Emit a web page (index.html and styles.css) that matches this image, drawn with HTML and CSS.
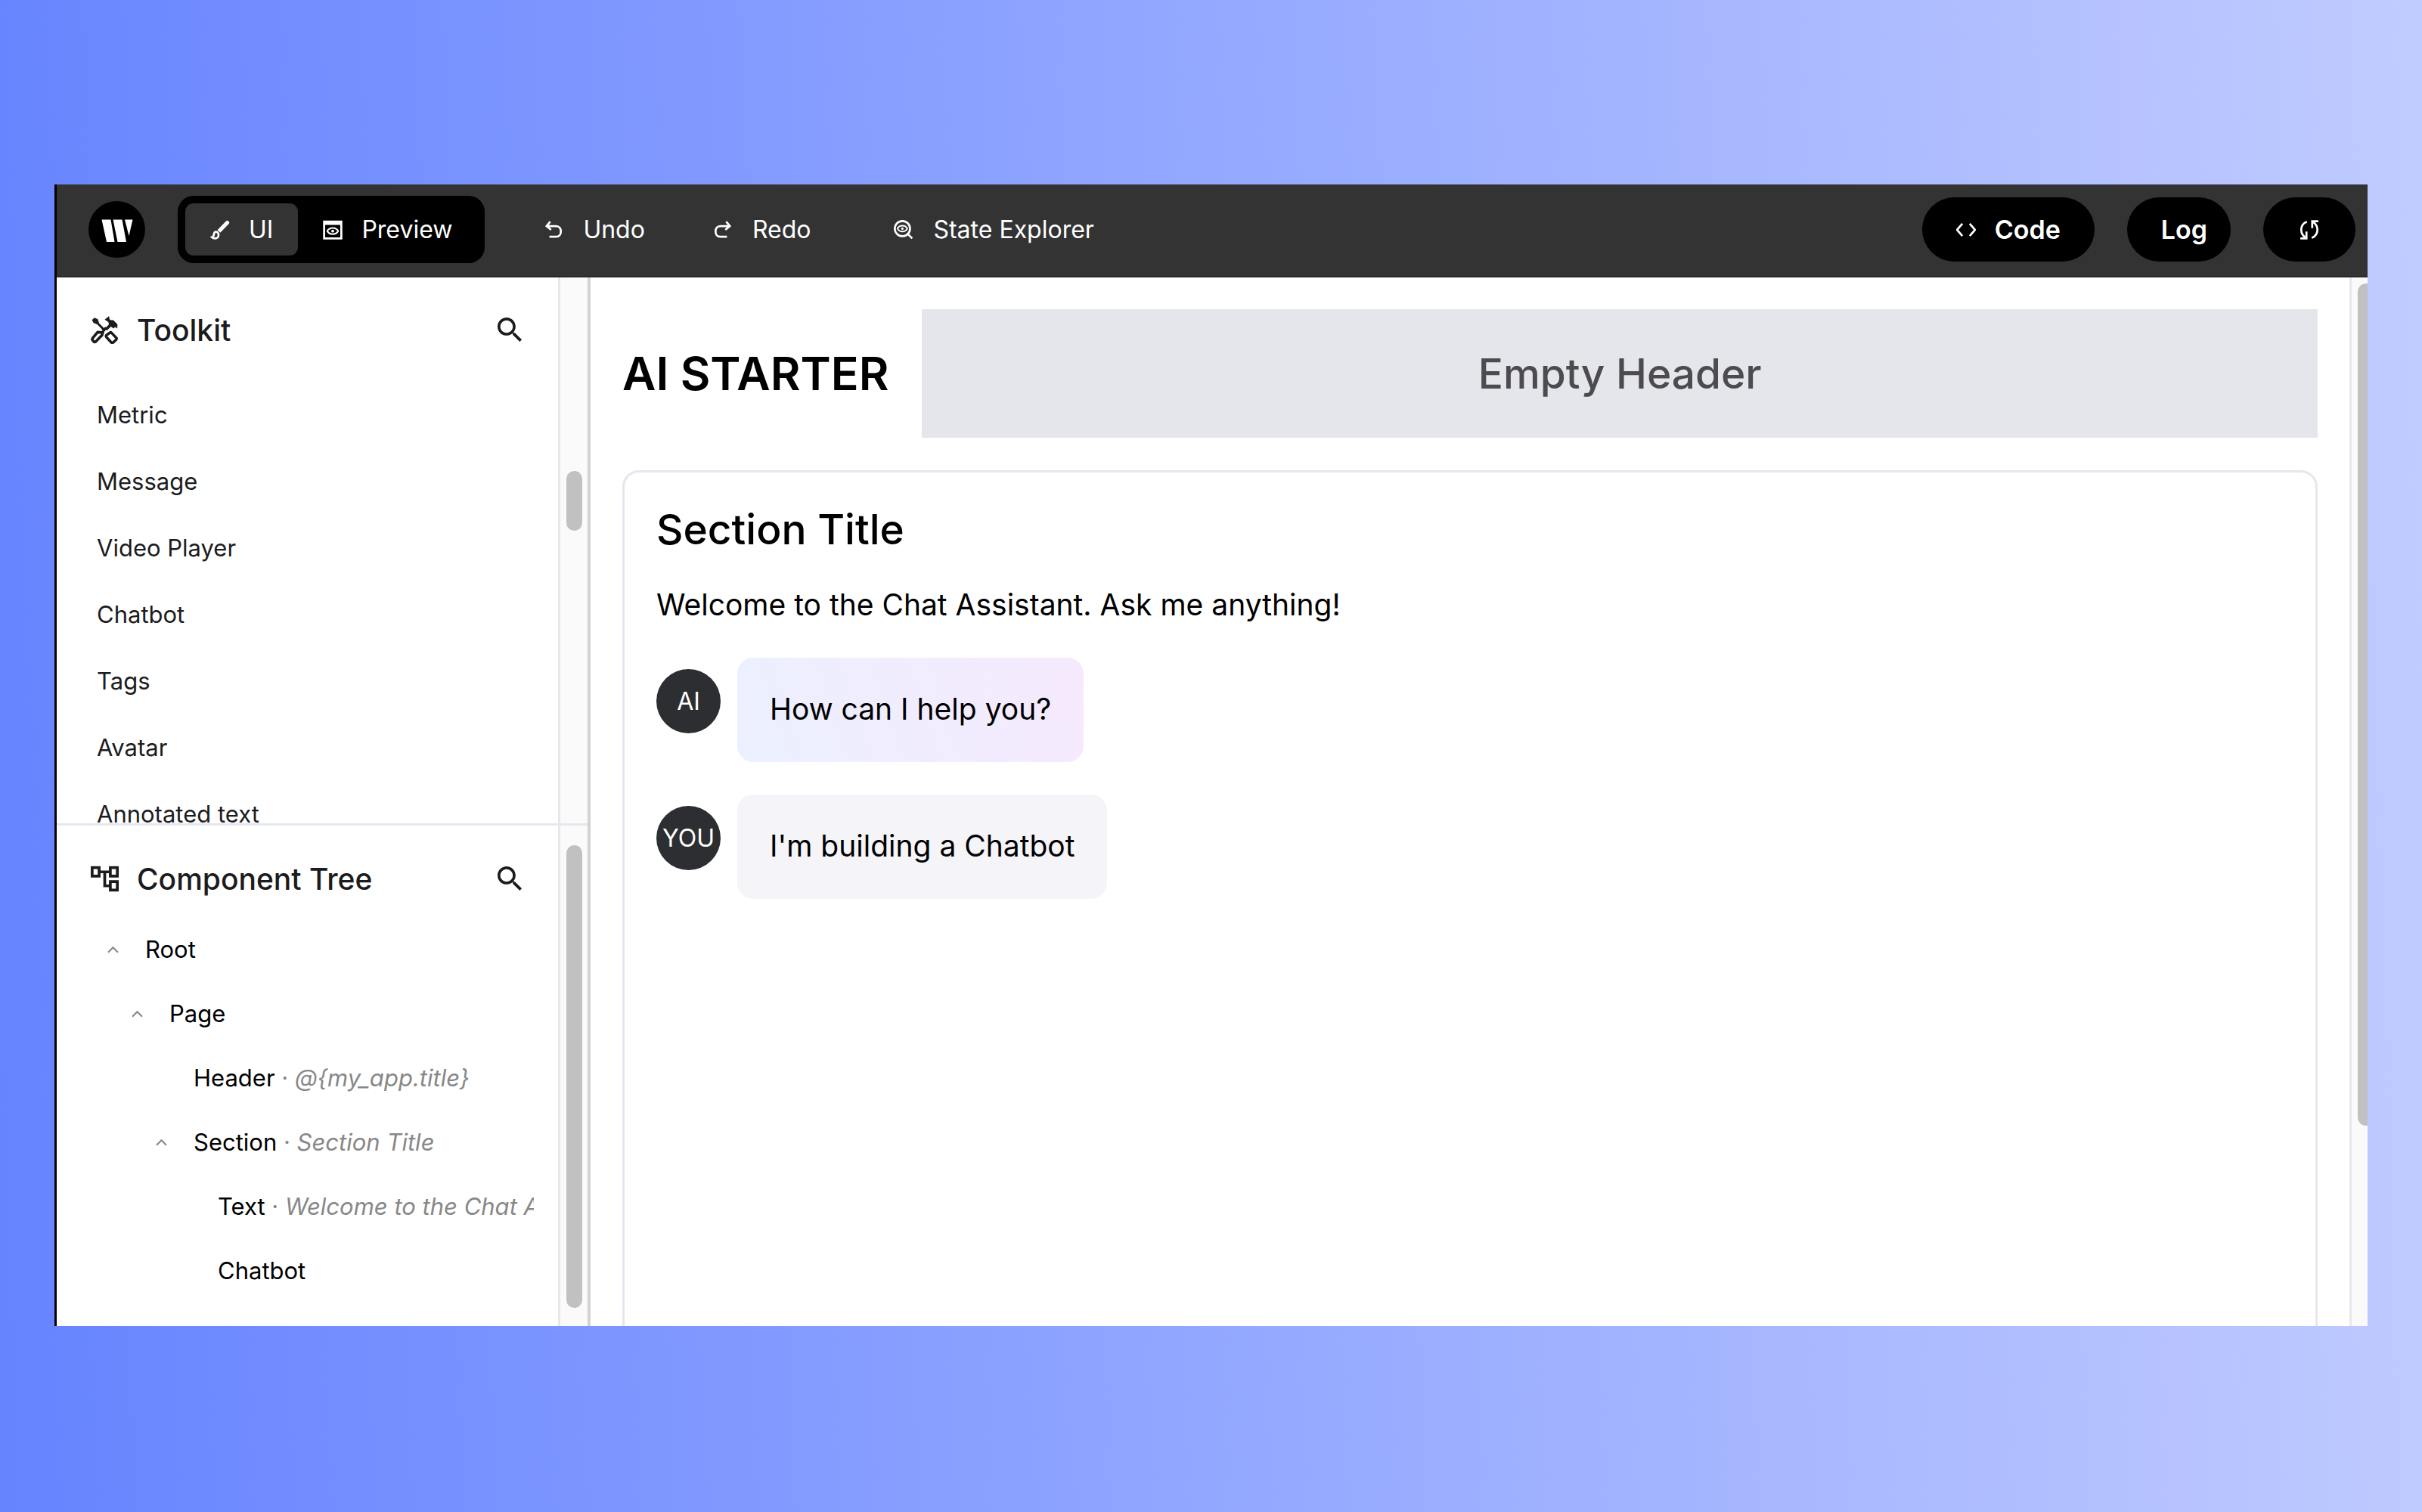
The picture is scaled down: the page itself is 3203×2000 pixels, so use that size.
FILE: index.html
```html
<!DOCTYPE html>
<html lang="en">
<head>
<meta charset="utf-8">
<title>AI Starter</title>
<link rel="stylesheet" href="styles.css">
</head>
<body>
<div class="window">
  <header class="topbar">
    <svg class="logo" viewBox="0 0 75 75" aria-label="Writer"><circle cx="37.500" cy="37.500" r="37.500"/><path fill="#fff" d="M17.500 24.500h12l5 29.500h-10.500zM32.500 24.500h12l5.500 29.500h-11.500zM48 24.500h10.500l-5 21.500z"/></svg>
    <div class="modes">
      <button class="mode active"><svg class="icon" viewBox="0 0 24 24"><path class="solid" d="M8.800 12.300 19.500 1.200c.8-.8 1.800-.8 2.600 0l.7.700c.8.800.8 1.800 0 2.600L12.300 15.500z"/><path d="M7.200 14.500c-1.800 0-2.700 1.300-2.700 3S3.500 20.500 2 21c1 1 2.500 1.500 4 1.500 2.500 0 4.200-1.800 4.200-4.300 0-2-1.200-3.700-3-3.700z"/></svg>UI</button>
      <button class="mode"><svg class="icon" viewBox="0 0 24 24"><path d="M1.500 2h21v20.500h-21z"/><path class="solid" d="M1 1h22v5H1z"/><path class="thin" d="M5.300 13.500c3-5 10.400-5 13.400 0-3 5-10.400 5-13.400 0z"/><circle class="solid" cx="12" cy="13.500" r="1.800"/></svg>Preview</button>
    </div>
    <nav class="actions">
      <button class="action"><svg class="icon" viewBox="0 0 24 24"><path d="M8 2 3.500 7.500 9 12M4 7.500h11c4 0 6 3 6 6.500s-2 6.500-6 6.500H7"/></svg>Undo</button>
      <button class="action"><svg class="icon" viewBox="0 0 24 24"><path d="M16 2l4.500 5.500L15 12M20 7.500H9c-4 0-6 3-6 6.500s2 6.500 6 6.500h8"/></svg>Redo</button>
      <button class="action explorer"><svg class="icon" viewBox="0 0 24 24"><circle cx="10.500" cy="10.500" r="9.300"/><path class="thin" d="M4.500 10.500c2.500-4.800 9.500-4.800 12 0-2.500 4.800-9.500 4.800-12 0z"/><circle class="solid" cx="10.500" cy="10.500" r="1.500"/><path d="m17 17 5.500 5.500"/></svg>State Explorer</button>
    </nav>
    <div class="tools">
      <button class="pill"><svg class="icon" viewBox="0 0 24 24"><path d="M7.500 4.500 1 12l6.500 7.500M16.500 4.500 23 12l-6.500 7.500"/></svg>Code</button>
      <button class="pill log">Log</button>
      <button class="pill refresh" aria-label="Refresh"><svg class="icon" viewBox="0 0 24 24"><path d="M9 2C0 6 0 17 8 22M1 22.500h7.500V14M15 22c9-4 9-15 1-20M23 1.500h-7.500V10"/></svg></button>
    </div>
  </header>
  <div class="workspace">
    <aside class="sidebar">
      <section class="panel toolkit">
        <div class="content">
          <div class="heading">
            <svg class="glyph" viewBox="31 34 110 114"><path d="m34 50 10-9 14 6 5 16 27 27-7 7-27-28-16-7z"/><path d="m86 49 17-14 4 15 14 1 17 17-1 17-9-6-6 6-11-8-16 16-8-8 16-16-2-10z"/><path class="handle" d="m92 82-14 14M78 101 57 100 37 124q-4 5 0 9l4 5q4 4 9 0l25-26zM93 112q-3 4 0 8l19 21q4 4 8 1l12-11q4-4 1-8l-19-20q-4-4-8 0z"/></svg>
            <h2>Toolkit</h2>
            <button class="search" aria-label="Search toolkit"><svg viewBox="3 3 18 18"><path d="M15.500 14h-.79l-.28-.27C15.410 12.590 16 11.110 16 9.500 16 5.910 13.090 3 9.500 3S3 5.910 3 9.500 5.910 16 9.500 16c1.610 0 3.090-.59 4.230-1.570l.27.28v.79l5 4.990L20.490 19l-4.990-5zm-6 0C7.010 14 5 11.990 5 9.500S7.010 5 9.500 5 14 7.010 14 9.500 11.990 14 9.500 14z"/></svg></button>
          </div>
          <ul class="kit">
            <li>Metric</li><li>Message</li><li>Video Player</li><li>Chatbot</li><li>Tags</li><li>Avatar</li><li>Annotated text</li>
          </ul>
        </div>
        <div class="track"><div class="thumb short"></div></div>
      </section>
      <section class="panel">
        <div class="content">
          <div class="heading tree-heading">
            <svg class="glyph" viewBox="2 2 20 20"><path d="M22 11V3h-7v3H9V3H2v8h7V8h2v10h4v3h7v-8h-7v3h-2V8h2v3h7zM7 9H4V5h3v4zm10 6h3v4h-3v-4zm0-10h3v4h-3V5z"/></svg>
            <h2>Component Tree</h2>
            <button class="search" aria-label="Search components"><svg viewBox="3 3 18 18"><path d="M15.500 14h-.79l-.28-.27C15.410 12.590 16 11.110 16 9.500 16 5.910 13.090 3 9.500 3S3 5.910 3 9.500 5.910 16 9.500 16c1.610 0 3.090-.59 4.230-1.570l.27.28v.79l5 4.990L20.490 19l-4.990-5zm-6 0C7.010 14 5 11.990 5 9.500S7.010 5 9.500 5 14 7.010 14 9.500 11.990 14 9.500 14z"/></svg></button>
          </div>
          <ul class="tree">
            <li class="d0"><button class="fold" aria-label="Collapse Root"><svg viewBox="0 0 14 9"><path d="m1 8 6-6 6 6"/></svg></button>Root</li>
            <li class="d1"><button class="fold" aria-label="Collapse Page"><svg viewBox="0 0 14 9"><path d="m1 8 6-6 6 6"/></svg></button>Page</li>
            <li class="d2 leaf">Header&nbsp;<span>· <i>@{my_app.title}</i></span></li>
            <li class="d2"><button class="fold" aria-label="Collapse Section"><svg viewBox="0 0 14 9"><path d="m1 8 6-6 6 6"/></svg></button>Section&nbsp;<span>· <i>Section Title</i></span></li>
            <li class="d3 leaf">Text&nbsp;<span>· <i>Welcome to the Chat Assistant. Ask me anything!</i></span></li>
            <li class="d3 leaf">Chatbot</li>
          </ul>
        </div>
        <div class="track"><div class="thumb long"></div></div>
      </section>
    </aside>
    <main class="canvas">
      <div class="page">
        <div class="page-head"><h1>AI STARTER</h1><div class="empty">Empty Header</div></div>
        <section class="card">
          <h2>Section Title</h2>
          <p>Welcome to the Chat Assistant. Ask me anything!</p>
          <div class="message"><span class="avatar">AI</span><div class="bubble ai">How can I help you?</div></div>
          <div class="message"><span class="avatar">YOU</span><div class="bubble">I'm building a Chatbot</div></div>
        </section>
      </div>
      <div class="edge"><div class="edge-thumb"></div></div>
    </main>
  </div>
</div>
</body>
</html>
```
FILE: styles.css
```css
* { box-sizing: border-box; }
body {
  margin: 0;
  height: 100vh;
  padding: 244px 72px 246px;
  display: flex;
  font-family: Inter, "Liberation Sans", sans-serif;
  font-size: 31px;
  color: #000;
  background: linear-gradient(88deg, #6684ff, #c0cbff);
}
h1, h2, p, ul { margin: 0; padding: 0; }
ul { list-style: none; }
button { margin: 0; padding: 0; border: 0; background: none; color: inherit; font: inherit; }
svg { display: block; fill: currentColor; flex: none; }

.window { flex: 1; min-width: 0; display: flex; flex-direction: column; border-left: 3px solid #000; background: #fff; overflow: hidden; }

.topbar { display: flex; align-items: center; height: 123px; padding: 0 16px 2px 42px; background: #333; border-bottom: 2px solid #292929; color: #fff; font-size: 32px; }
.logo { width: 75px; height: 75px; fill: #000; }
.modes { display: flex; margin-left: 43px; padding: 10px; border-radius: 21px; background: #000; }
.mode { display: flex; align-items: center; gap: 25px; height: 69px; padding: 0 33px; border-radius: 11px; }
.mode.active { background: #333; }
.icon { width: 26px; height: 26px; fill: none; stroke: currentColor; stroke-width: 2.500; }
.icon .solid { fill: currentColor; stroke: none; }
.icon .thin { stroke-width: 1.800; }
.actions { display: flex; margin-left: 78px; gap: 90px; }
.action { display: flex; align-items: center; gap: 26px; }
.explorer { margin-left: 20px; }
.tools { display: flex; gap: 43px; margin-left: auto; font-size: 34px; font-weight: 600; }
.pill { display: flex; align-items: center; gap: 25px; height: 85px; padding: 0 45px; border-radius: 43px; background: #000; }
.log { padding: 0 31px 0 45px; }
.refresh { padding: 0 48px; }

.workspace { flex: 1; min-height: 0; display: flex; }
.sidebar { width: 706px; flex: none; display: flex; flex-direction: column; border-right: 4px solid #d2d2d2; color: #1c1c1e; }
.panel { display: flex; min-height: 0; }
.toolkit { flex: 1; border-bottom: 3px solid #e6e7ee; }
.content { flex: 1; min-width: 0; overflow: hidden; }
.heading { display: flex; align-items: center; height: 138px; padding: 0 47px 0 45px; }
.tree-heading { height: 121px; padding-top: 19px; }
.heading h2 { flex: 1; margin-left: 24px; font-size: 39px; font-weight: 500; }
.glyph { width: 37px; height: 37px; }
.handle { fill: none; stroke: currentColor; stroke-width: 11; }
.search svg { width: 33px; height: 33px; }
.kit li { height: 88px; line-height: 88px; padding-left: 53px; }
.track { width: 39px; flex: none; padding: 26px 8px 24px; border-left: 3px solid #e8e8e8; background: #fafafa; }
.thumb { width: 21px; border-radius: 11px; background: #c1c1c1; }
.short { height: 79px; margin-top: 230px; }
.long { height: 100%; }
.tree { margin-right: 32px; padding: 0 0 31px 67px; overflow: hidden; color: #000; }
.tree li { display: flex; align-items: center; height: 85px; white-space: nowrap; overflow: hidden; }
.tree span { color: #888; }
.fold { flex: none; width: 50px; }
.fold svg { width: 15px; height: 10px; fill: none; stroke: #888; stroke-width: 2; }
.leaf::before { content: ""; flex: none; width: 50px; }
.tree .d1 { padding-left: 32px; }
.tree .d2 { padding-left: 64px; }
.tree .d3 { padding-left: 96px; }

.canvas { flex: 1; min-width: 0; display: flex; }
.page { flex: 1; min-width: 0; display: flex; flex-direction: column; padding: 42px 42px 0; }
.page-head { display: flex; align-items: stretch; gap: 44px; }
.page-head h1 { align-self: center; font-size: 61px; font-weight: 600; white-space: nowrap; }
.empty { flex: 1; display: flex; align-items: center; justify-content: center; height: 170px; background: #e5e6eb; color: #4c4c50; font-size: 55px; font-weight: 500; }
.card { flex: 1; margin-top: 43px; padding: 41px 42px; border: 3px solid #e6e7ee; border-bottom: 0; border-radius: 22px 22px 0 0; }
.card h2 { font-size: 55px; line-height: 68px; font-weight: 500; }
.card p { margin: 32px 0 36px; font-size: 39px; line-height: 68px; }
.message { display: flex; gap: 22px; margin-bottom: 43px; }
.avatar { display: flex; align-items: center; justify-content: center; width: 85px; height: 85px; margin-top: 15px; border-radius: 50%; background: #2d2e32; color: #fff; font-size: 32px; }
.bubble { padding: 34px 43px 36px; border-radius: 21px; background: #f4f4f9; font-size: 39px; line-height: 68px; }
.ai { background: linear-gradient(70deg, #ebf0ff, #f6e9fe); }
.edge { width: 24px; flex: none; padding: 8px 0 265px 8px; border-left: 3px solid #e8e8e8; background: #fafafa; }
.edge-thumb { height: 100%; border-radius: 11px 0 0 11px; background: #c1c1c1; }
```
